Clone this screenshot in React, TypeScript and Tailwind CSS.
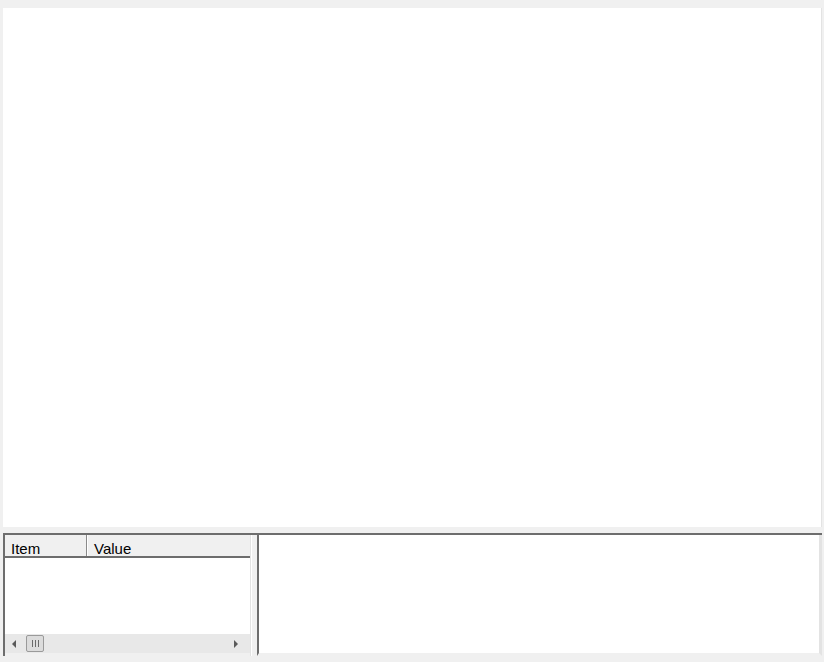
export default function App() {
  return (
    <div className="w-[824px] h-[662px] bg-[#f0f0f0] flex flex-col pl-[3px] pr-[2px] pt-[8px] overflow-hidden" style={{ fontFamily: '"Liberation Sans", Arial, sans-serif' }}>
      <div className="h-[519px] w-[819px] bg-white border-r border-[#e3e3e3]" />
      <div className="h-[6px]" />
      <div className="flex h-[123px] w-[819px] border-t-2 border-[#6d6d6d]">
        <div className="w-[248px] flex flex-col border-l-2 border-[#6d6d6d] border-r border-r-[#e3e3e3] bg-white">
          <div className="h-[23px] flex bg-[#f0f0f0] border-b-2 border-[#6d6d6d] text-[15px] text-black leading-none">
            <div className="w-[82px] border-r border-[#8a8a8a] pl-[6px] flex items-center pt-[5px]">Item</div>
            <div className="flex-1 border-l border-white pl-[6px] flex items-center pt-[5px]">Value</div>
          </div>
          <div className="flex-1" />
          <div className="h-[19px] bg-[#e8e8e8] flex items-center px-[4px]">
            <svg width="10" height="10" viewBox="0 0 10 10" className="ml-0">
              <path d="M7 1 L3 5 L7 9 Z" fill="#5a5a5a" />
            </svg>
            <div className="ml-[7px] w-[18px] h-[17px] rounded-[2px] border border-[#9a9a9a] bg-[#dcdcdc] flex items-center justify-center gap-[2px]">
              <div className="w-px h-[7px] bg-[#6a6a6a]" />
              <div className="w-px h-[7px] bg-[#6a6a6a]" />
              <div className="w-px h-[7px] bg-[#6a6a6a]" />
            </div>
            <div className="flex-1" />
            <svg width="10" height="10" viewBox="0 0 10 10" className="mr-[5px]">
              <path d="M3 1 L7 5 L3 9 Z" fill="#5a5a5a" />
            </svg>
          </div>
          <div className="h-[3px] bg-[#f0f0f0]" />
        </div>
        <div className="w-[6px] bg-[#f0f0f0] border-l border-white" />
        <div className="flex-1 bg-white border-l-2 border-[#6d6d6d] border-r-[3px] border-r-[#e3e3e3] border-b-[3px] border-b-[#f0f0f0]" />
      </div>
    </div>
  );
}
